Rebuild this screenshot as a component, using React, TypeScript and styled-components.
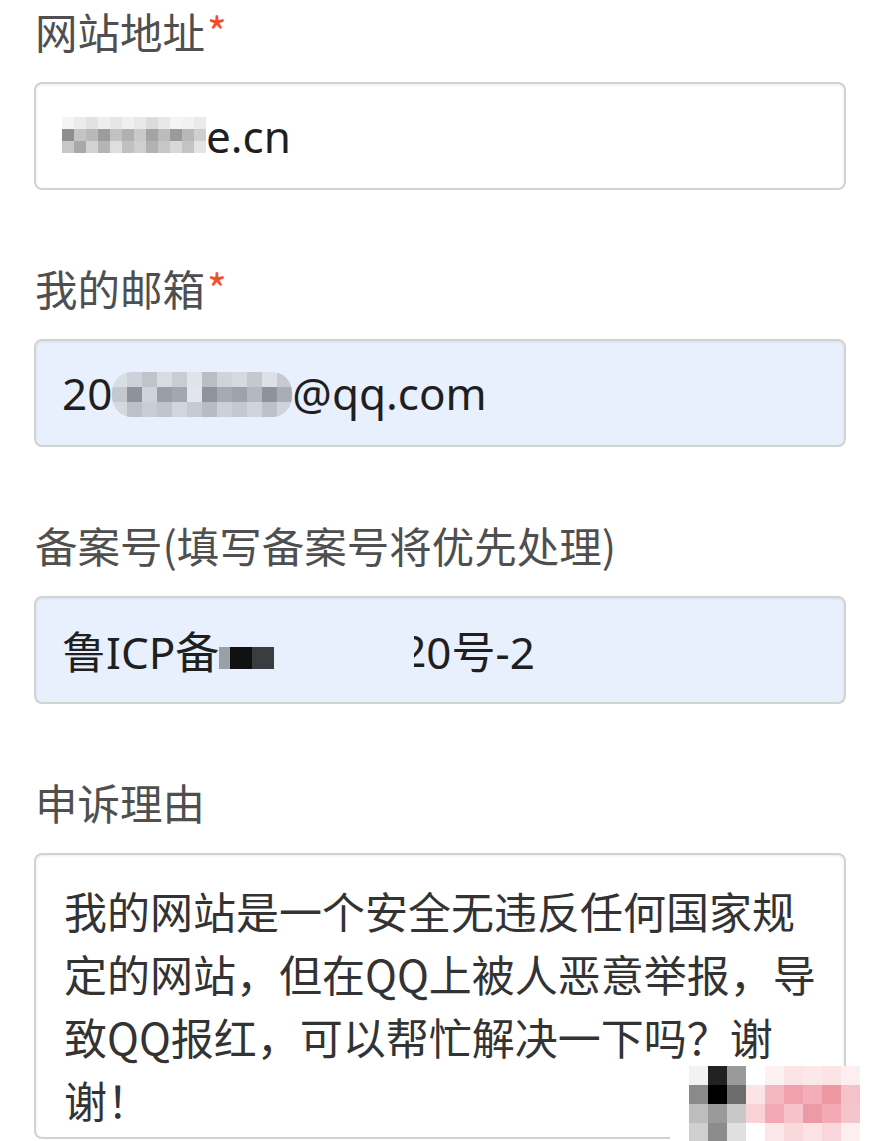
import styled, { createGlobalStyle } from "styled-components";

const GlobalStyle = createGlobalStyle`
    html, body {
        margin: 0;
        padding: 0;
        background: #ffffff;
    }
    body {
        font-family: "Noto Sans CJK SC", "Noto Sans", sans-serif;
    }
`;

const Page = styled.main`
    position: relative;
    width: 878px;
    height: 1141px;
    overflow: hidden;
    box-sizing: border-box;
    padding: 3px 32px 0 34px;
`;

const Field = styled.div`
    display: flex;
    flex-direction: column;
    margin-bottom: 70px;
`;

const Label = styled.label`
    display: block;
    font-size: 42.5px;
    line-height: 56px;
    color: #4f4f4f;
    margin: 0 0 23px 1px;
`;

const Required = styled.span`
    color: #f2502c;
    margin-left: 2px;
`;

const InputBox = styled.div<{ $filled?: boolean }>`
    height: 108px;
    box-sizing: border-box;
    display: flex;
    align-items: center;
    padding: 0 26px;
    border: 2px solid #d2d2d2;
    border-radius: 8px;
    background: ${({ $filled }) => ($filled ? "#e8f0fe" : "#ffffff")};
    box-shadow: inset 0 1px 3px rgba(0, 0, 0, 0.08);
    font-family: "Noto Sans", "Noto Sans CJK SC", sans-serif;
    font-size: 44px;
    color: #1f1f1f;
    white-space: nowrap;
`;

const Gap = styled.span<{ $w: number }>`
    display: inline-block;
    width: ${({ $w }) => $w}px;
`;

/* right-hand sliver of a glyph whose left part is hidden */
const Partial = styled.span<{ $w: number }>`
    display: inline-block;
    width: ${({ $w }) => $w}px;
    overflow: hidden;
    direction: rtl;
`;

const TextArea = styled.textarea`
    display: block;
    width: 100%;
    height: 286px;
    box-sizing: border-box;
    padding: 24px 20px 0 28px;
    border: 2px solid #d2d2d2;
    border-radius: 8px;
    background: #ffffff;
    box-shadow: inset 0 1px 3px rgba(0, 0, 0, 0.08);
    font-family: "Noto Sans CJK SC", sans-serif;
    font-size: 43px;
    line-height: 63px;
    color: #333333;
    resize: none;
    overflow: hidden;
    outline: none;
`;

const Grid = styled.span<{ $cols: number; $cell: number; $dy: number; $round: number }>`
    display: inline-grid;
    grid-template-columns: repeat(${({ $cols }) => $cols}, ${({ $cell }) => $cell}px);
    grid-auto-rows: ${({ $cell }) => $cell}px;
    vertical-align: middle;
    position: relative;
    top: ${({ $dy }) => $dy}px;
    border-radius: ${({ $round }) => $round}px;
    overflow: hidden;
`;

const Watermark = styled.div`
    position: absolute;
    left: 670px;
    top: 1066px;
`;

const Mosaic = ({ rows, cell, dy = 0, round = 0 }: { rows: string[][]; cell: number; dy?: number; round?: number }) => (
    <Grid $cols={rows[0].length} $cell={cell} $dy={dy} $round={round}>
        {rows.flat().map((c, i) => (
            <span key={i} style={{ background: c }} />
        ))}
    </Grid>
);

const siteBlur = [
    ["#f4f4f4", "#ececec", "#e2e2e2", "#eeeeee", "#e6e6e6", "#f0f0f0", "#e9e9e9", "#dcdcdc", "#e8e8e8", "#f5f5f5", "#f2f2f2", "#ebebeb"],
    ["#8f8f8f", "#c4c4c4", "#b9b9b9", "#9c9c9c", "#c2c2c2", "#b0b0b0", "#c9c9c9", "#a4a4a4", "#bcbcbc", "#9a9a9a", "#b8b8b8", "#cfcfcf"],
    ["#c8c8c8", "#a9a9a9", "#d3d3d3", "#b5b5b5", "#dedede", "#c0c0c0", "#cfcfcf", "#b2b2b2", "#c6c6c6", "#d8d8d8", "#c4c4c4", "#e4e4e4"],
];

const mailBlur = [
    ["#d9dde4", "#cdd2da", "#bfc4cc", "#d7dbe2", "#c8ccd3", "#e0e3e9", "#b9bec6", "#cfd3da", "#d5d9e0", "#c4c8cf", "#dde0e6", "#c6cbd2"],
    ["#c3c8d0", "#8e939b", "#cfd4db", "#9a9fa7", "#a3a8b0", "#e2e6ec", "#8f949c", "#a6abb3", "#9ea3ab", "#b4b9c1", "#8e939b", "#a9aeb6"],
    ["#d4d8df", "#bcc1c9", "#c9cdd5", "#c0c5cc", "#d1d5dc", "#c6cad1", "#b7bcc3", "#ccd0d7", "#c4c8cf", "#d0d4db", "#bdc2c9", "#cfd3da"],
];

const icpBlur = [
    ["#9aa0a8", "#111111", "#111111", "#3a3c40", "#3a3c40"],
    ["#9aa0a8", "#111111", "#111111", "#3a3c40", "#3a3c40"],
];

const markBlur = [
    ["#ffffff", "#f2f2f2", "#222222", "#9a9a9a", "#ffffff", "#fdf2f3", "#fbe3e6", "#fce8ea", "#fbe3e6", "#fdeff1"],
    ["#ffffff", "#8a8a8a", "#000000", "#6c6c6c", "#fbe3e6", "#f6b8c0", "#f1a1ac", "#f3aeb8", "#ee98a4", "#f5c2c9"],
    ["#ffffff", "#bdbdbd", "#9a9a9a", "#c8c8c8", "#f8d2d7", "#f3a9b3", "#f6c3ca", "#ee9aa6", "#f3aab4", "#f6c5cc"],
    ["#ffffff", "#cfcfcf", "#8c8c8c", "#e0e0e0", "#ffffff", "#fbe7ea", "#fad9dd", "#fbe2e5", "#f9d6db", "#fdeef0"],
];

export default function App() {
    return (
        <>
            <GlobalStyle />
            <Page>
                <Field>
                    <Label>网站地址<Required>*</Required></Label>
                    <InputBox>
                        <Mosaic rows={siteBlur} cell={12} dy={-1} />
                        e.cn
                    </InputBox>
                </Field>

                <Field>
                    <Label>我的邮箱<Required>*</Required></Label>
                    <InputBox $filled>
                        20
                        <Mosaic rows={mailBlur} cell={15} dy={1} round={20} />
                        @qq.com
                    </InputBox>
                </Field>

                <Field>
                    <Label>备案号(填写备案号将优先处理)</Label>
                    <InputBox $filled>
                        鲁ICP备
                        <Mosaic rows={icpBlur} cell={11} dy={8} />
                        <Gap $w={140} />
                        <Partial $w={12}>2</Partial>
                        0号-2
                    </InputBox>
                </Field>

                <Field>
                    <Label>申诉理由</Label>
                    <TextArea
                        readOnly
                        value="我的网站是一个安全无违反任何国家规定的网站，但在QQ上被人恶意举报，导致QQ报红，可以帮忙解决一下吗？谢谢！"
                    />
                </Field>

                <Watermark>
                    <Mosaic rows={markBlur} cell={19} />
                </Watermark>
            </Page>
        </>
    );
}
